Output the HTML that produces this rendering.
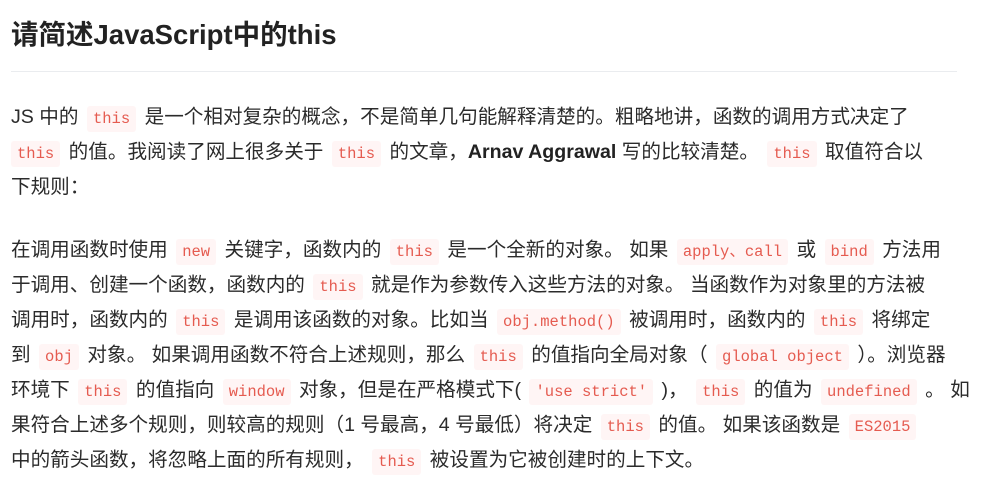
<!DOCTYPE html>
<html><head><meta charset="utf-8"><style>
body{margin:0;background:#fff;width:988px;height:502px;overflow:hidden;font-family:"Liberation Sans","Noto Sans CJK SC",sans-serif;color:#333}
h1{position:absolute;left:11px;top:15px;margin:0;font-size:27.5px;font-weight:bold;line-height:40px;color:#222}
.hr{position:absolute;left:11px;top:71px;width:946px;height:1px;background:#eaecef}
.l{position:absolute;left:11px;white-space:nowrap;font-size:19.6px;line-height:35px;color:#2b2b2b}
code{font-family:"Liberation Mono","DejaVu Sans Mono",monospace;font-size:15.5px;color:#e55b50;background:#fff5f5;padding:4px 6px;border-radius:3px;margin:0 3px}
b{color:#222}
</style></head><body>
<h1>请简述JavaScript中的this</h1>
<div class="hr"></div>
<div class="l" style="top:100px">JS 中的 <code>this</code> 是一个相对复杂的概念，不是简单几句能解释清楚的。粗略地讲，函数的调用方式决定了</div>
<div class="l" style="top:135px"><code style="margin-left:0">this</code> 的值。我阅读了网上很多关于 <code>this</code> 的文章，<b>Arnav Aggrawal</b> 写的比较清楚。 <code>this</code> 取值符合以</div>
<div class="l" style="top:170px">下规则：</div>
<div class="l" style="top:233px">在调用函数时使用 <code>new</code> 关键字，函数内的 <code>this</code> 是一个全新的对象。 如果 <code>apply、call</code> 或 <code>bind</code> 方法用</div>
<div class="l" style="top:268px">于调用、创建一个函数，函数内的 <code>this</code> 就是作为参数传入这些方法的对象。 当函数作为对象里的方法被</div>
<div class="l" style="top:303px">调用时，函数内的 <code>this</code> 是调用该函数的对象。比如当 <code>obj.method()</code> 被调用时，函数内的 <code>this</code> 将绑定</div>
<div class="l" style="top:338px">到 <code>obj</code> 对象。 如果调用函数不符合上述规则，那么 <code>this</code> 的值指向全局对象（ <code>global object</code> ）。浏览器</div>
<div class="l" style="top:373px">环境下 <code>this</code> 的值指向 <code>window</code> 对象，但是在严格模式下( <code>'use strict'</code> )， <code>this</code> 的值为 <code>undefined</code> 。 如</div>
<div class="l" style="top:408px">果符合上述多个规则，则较高的规则（1 号最高，4 号最低）将决定 <code>this</code> 的值。 如果该函数是 <code>ES2015</code></div>
<div class="l" style="top:443px">中的箭头函数，将忽略上面的所有规则， <code>this</code> 被设置为它被创建时的上下文。</div>
</body></html>
